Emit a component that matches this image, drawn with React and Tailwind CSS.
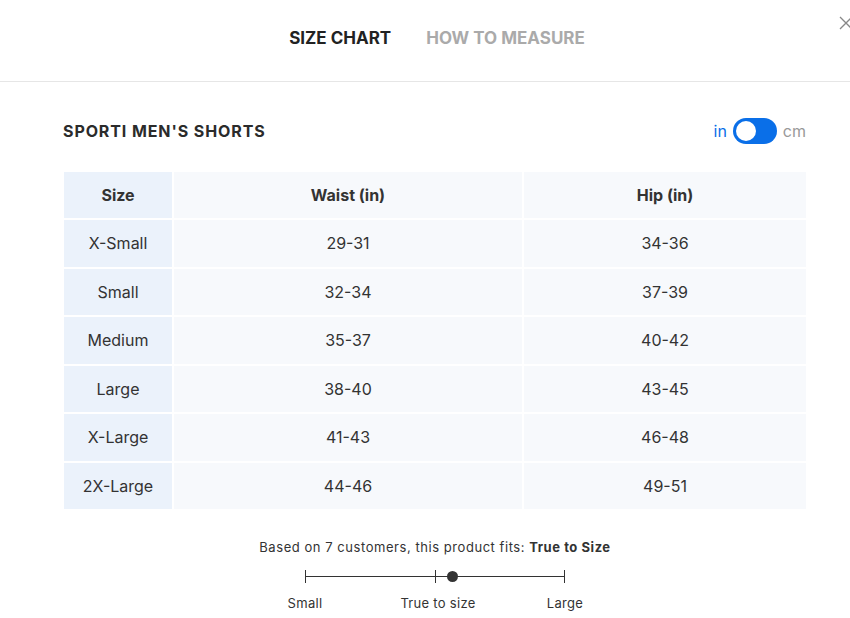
import React, { useState } from "react";

const rows = [
  ["X-Small", "29-31", "34-36"],
  ["Small", "32-34", "37-39"],
  ["Medium", "35-37", "40-42"],
  ["Large", "38-40", "43-45"],
  ["X-Large", "41-43", "46-48"],
  ["2X-Large", "44-46", "49-51"],
];

export default function App() {
  const [metric, setMetric] = useState(false);

  return (
    <div className="w-[850px] h-[618px] overflow-hidden bg-white">
      <div className="relative w-[870px] h-[618px] text-[#333] font-['Inter',sans-serif]">
        {/* Close */}
        <button className="absolute left-[838px] top-[15px] w-[16px] h-[16px]">
          <svg viewBox="0 0 16 16" className="w-[16px] h-[16px]" stroke="#888" strokeWidth="1.3" fill="none">
            <path d="M2 2 L14 14 M14 2 L2 14" />
          </svg>
        </button>

        {/* Tabs */}
        <div className="h-[82px] border-b border-[#e6e6e6] flex justify-center items-start pt-[26px] gap-[35px]">
          <div className="text-[17px] font-bold text-[#222] pl-[4px]">SIZE CHART</div>
          <div className="text-[17px] font-bold text-[#aaa]">HOW TO MEASURE</div>
        </div>

        <div className="px-[64px]">
          {/* Title + toggle */}
          <div className="flex items-center justify-between pt-[30px] pb-[21px] h-[88px]">
            <h2 className="text-[16px] font-bold text-[#2b2b2b] tracking-[0.9px] -ml-[1px]">SPORTI MEN'S SHORTS</h2>
            <div className="flex items-center gap-[6px] text-[16px]">
              <span className={metric ? "text-[#999]" : "text-[#0a6fe8]"}>in</span>
              <button
                onClick={() => setMetric(!metric)}
                className="w-[44px] h-[26px] rounded-full bg-[#0a6fe8] p-[3px] flex"
              >
                <span className={`w-[20px] h-[20px] rounded-full bg-white ${metric ? "ml-auto" : ""}`} />
              </button>
              <span className={metric ? "text-[#0a6fe8]" : "text-[#999]"}>cm</span>
            </div>
          </div>

          {/* Table */}
          <div className="grid grid-cols-[108px_348px_1fr] gap-[2px] text-[16px] text-center mt-[2px]">
            <div className="bg-[#ebf2fb] h-[46px] flex items-center justify-center font-bold">Size</div>
            <div className="bg-[#f7f9fc] h-[46px] flex items-center justify-center font-bold">Waist (in)</div>
            <div className="bg-[#f7f9fc] h-[46px] flex items-center justify-center font-bold">Hip (in)</div>
            {rows.map(([s, w, h]) => (
              <React.Fragment key={s}>
                <div className="bg-[#ebf2fb] h-[46.5px] flex items-center justify-center">{s}</div>
                <div className="bg-[#f7f9fc] h-[46.5px] flex items-center justify-center">{w}</div>
                <div className="bg-[#f7f9fc] h-[46.5px] flex items-center justify-center">{h}</div>
              </React.Fragment>
            ))}
          </div>
        </div>

        {/* Fit scale */}
        <div className="flex flex-col items-center mt-[29px] text-[13px] text-[#333]">
          <p className="tracking-[0.55px]">
            Based on 7 customers, this product fits: <span className="font-bold">True to Size</span>
          </p>
          <div className="relative w-[260px] h-[14px] mt-[12px]">
            <div className="absolute left-0 right-0 top-[6px] h-px bg-[#333]" />
            <div className="absolute left-0 top-0 w-px h-[13px] bg-[#333]" />
            <div className="absolute left-[130px] top-0 w-px h-[13px] bg-[#333]" />
            <div className="absolute right-0 top-0 w-px h-[13px] bg-[#333]" />
            <div className="absolute left-[142px] top-[1px] w-[11px] h-[11px] rounded-full bg-[#333]" />
          </div>
          <div className="relative w-[260px] h-[20px] mt-[10px] tracking-[0.3px]">
            <span className="absolute left-0 -translate-x-1/2">Small</span>
            <span className="absolute left-[133px] -translate-x-1/2 whitespace-nowrap">True to size</span>
            <span className="absolute right-0 translate-x-1/2">Large</span>
          </div>
        </div>
      </div>
    </div>
  );
}
